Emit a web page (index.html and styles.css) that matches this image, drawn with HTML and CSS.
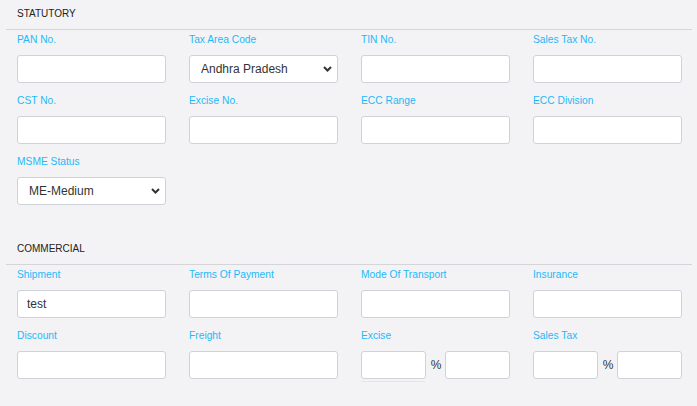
FILE: index.html
```html
<!DOCTYPE html>
<html lang="en">
<head>
<meta charset="utf-8">
<title>Vendor details</title>
<link rel="stylesheet" href="styles.css">
</head>
<body>
<section class="section">
  <h2 class="section-title">STATUTORY</h2>
  <div class="grid">
    <div class="field"><label class="label">PAN No.</label><input class="control" type="text"></div>
    <div class="field"><label class="label">Tax Area Code</label>
      <div class="select-wrap">
        <select class="control select"><option>Andhra Pradesh</option></select>
        <svg class="chevron" width="9" height="6" viewBox="0 0 9 6"><path d="M1 1 L4.5 4.5 L8 1" fill="none" stroke="#333" stroke-width="2"/></svg>
      </div>
    </div>
    <div class="field"><label class="label">TIN No.</label><input class="control" type="text"></div>
    <div class="field"><label class="label">Sales Tax No.</label><input class="control" type="text"></div>
    <div class="field"><label class="label">CST No.</label><input class="control" type="text"></div>
    <div class="field"><label class="label">Excise No.</label><input class="control" type="text"></div>
    <div class="field"><label class="label">ECC Range</label><input class="control" type="text"></div>
    <div class="field"><label class="label">ECC Division</label><input class="control" type="text"></div>
    <div class="field"><label class="label">MSME Status</label>
      <div class="select-wrap">
        <select class="control select"><option>ME-Medium</option></select>
        <svg class="chevron" width="9" height="6" viewBox="0 0 9 6"><path d="M1 1 L4.5 4.5 L8 1" fill="none" stroke="#333" stroke-width="2"/></svg>
      </div>
    </div>
  </div>
</section>
<section class="section">
  <h2 class="section-title">COMMERCIAL</h2>
  <div class="grid">
    <div class="field"><label class="label">Shipment</label><input class="control" type="text" value="test"></div>
    <div class="field"><label class="label">Terms Of Payment</label><input class="control" type="text"></div>
    <div class="field"><label class="label">Mode Of Transport</label><input class="control" type="text"></div>
    <div class="field"><label class="label">Insurance</label><input class="control" type="text"></div>
    <div class="field"><label class="label">Discount</label><input class="control" type="text"></div>
    <div class="field"><label class="label">Freight</label><input class="control" type="text"></div>
    <div class="field"><label class="label">Excise</label>
      <div class="split">
        <div class="split-part touched"><input class="control" type="text"></div>
        <span class="pct">%</span>
        <div class="split-part"><input class="control" type="text"></div>
      </div>
    </div>
    <div class="field"><label class="label">Sales Tax</label>
      <div class="split">
        <div class="split-part"><input class="control" type="text"></div>
        <span class="pct">%</span>
        <div class="split-part"><input class="control" type="text"></div>
      </div>
    </div>
  </div>
</section>
</body>
</html>
```

FILE: styles.css
```css
html, body {
  margin: 0;
  padding: 0;
  background: #f3f3f6;
  font-family: "Liberation Sans", Arial, sans-serif;
}

.section {
  padding: 0 5px 0 6px;
  margin-bottom: 30px;
}

.section-title {
  margin: 0;
  padding: 7px 11px 9px;
  font-size: 10px;
  line-height: 13px;
  font-weight: normal;
  color: #222;
  border-bottom: 1px solid #d5d5d9;
}

.grid {
  display: grid;
  grid-template-columns: repeat(4, 149px);
  column-gap: 23px;
  row-gap: 11px;
  padding: 3px 0 0 11px;
}

.field {
  display: flex;
  flex-direction: column;
}

.label {
  font-size: 10.25px;
  line-height: 13px;
  color: #1fb8f8;
  margin-bottom: 9px;
}

.control {
  box-sizing: border-box;
  width: 100%;
  height: 28px;
  margin: 0;
  padding: 0 9px;
  background: #fff;
  border: 1px solid #cfd2d8;
  border-radius: 3px;
  font-family: "Liberation Sans", Arial, sans-serif;
  font-size: 12px;
  color: #333;
  outline: none;
}

.select-wrap {
  position: relative;
}

.select {
  -webkit-appearance: none;
  appearance: none;
  padding-left: 11px;
}

.chevron {
  position: absolute;
  right: 6px;
  top: 11px;
  pointer-events: none;
}

.split {
  display: flex;
  align-items: center;
}

.split-part {
  flex: 1;
  position: relative;
}

.touched::after {
  content: "";
  position: absolute;
  left: 0;
  right: 1px;
  bottom: -3px;
  height: 1px;
  background: #dbe6f7;
}

.pct {
  font-size: 12px;
  color: #333;
  margin: 0 4px 0 5px;
}
```
